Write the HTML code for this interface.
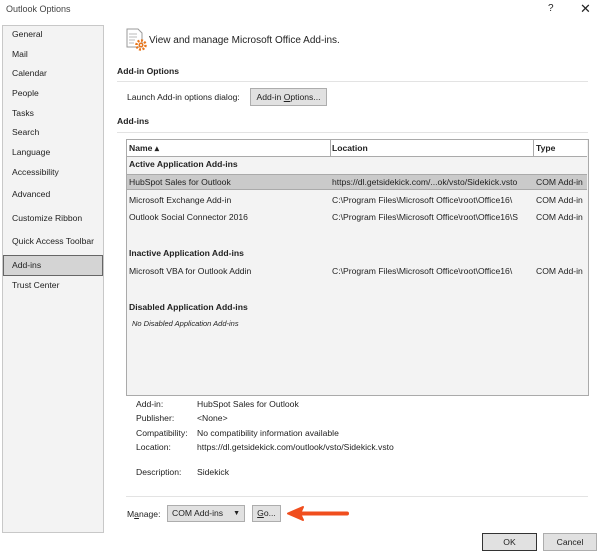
<!DOCTYPE html><html><head><style>
body{margin:0;width:600px;height:554px;background:#fff;font-family:"Liberation Sans",sans-serif;font-size:8.6px;color:#222;position:relative;overflow:hidden}
.a{position:absolute;white-space:nowrap}
.b{font-weight:bold}
.side{position:absolute;left:2px;top:25px;width:100px;height:506px;border:1px solid #c8c8c8;background:#f3f3f3}
.btn{position:absolute;background:#e1e1e1;border:1px solid #adadad;text-align:center;box-sizing:border-box}
.hr{position:absolute;height:1px;background:#e3e3e3}
</style></head><body>
<div class="a" style="left:6px;top:4px;font-size:9px;color:#444">Outlook Options</div>
<div class="a" style="left:548px;top:3px;font-size:10px">?</div>
<div class="a" style="left:580px;top:1px;font-size:13px">✕</div>
<div class="side"></div>
<div class="a" style="left:12px;top:29px">General</div>
<div class="a" style="left:12px;top:49px">Mail</div>
<div class="a" style="left:12px;top:68px">Calendar</div>
<div class="a" style="left:12px;top:88px">People</div>
<div class="a" style="left:12px;top:108px">Tasks</div>
<div class="a" style="left:12px;top:127px">Search</div>
<div class="a" style="left:12px;top:147px">Language</div>
<div class="a" style="left:12px;top:167px">Accessibility</div>
<div class="a" style="left:12px;top:189px">Advanced</div>
<div class="a" style="left:12px;top:213px">Customize Ribbon</div>
<div class="a" style="left:12px;top:236px">Quick Access Toolbar</div>
<div class="a" style="left:3px;top:255px;width:98px;height:19px;background:#d4d4d4;border:1px solid #666"></div>
<div class="a" style="left:12px;top:260px">Add-ins</div>
<div class="a" style="left:12px;top:280px">Trust Center</div>
<svg class="a" style="left:126px;top:28px" width="22" height="24"><path d="M1 1h11l4 4v14H1z" fill="#fff" stroke="#999"/><path d="M3 6h8M3 9h8M3 12h6M3 15h5" stroke="#bbb"/><circle cx="15" cy="17" r="4.5" fill="none" stroke="#e8761c" stroke-width="2.5" stroke-dasharray="2 1.5"/><circle cx="15" cy="17" r="2.5" fill="#e8761c"/><circle cx="15" cy="17" r="1" fill="#fff"/></svg>
<div class="a" style="left:149px;top:35px;font-size:10px">View and manage Microsoft Office Add-ins.</div>
<div class="a b" style="left:117px;top:66px">Add-in Options</div>
<div class="hr" style="left:117px;top:81px;width:471px"></div>
<div class="a" style="left:127px;top:92px">Launch Add-in options dialog:</div>
<div class="btn" style="left:250px;top:88px;width:77px;height:18px;line-height:16px">Add-in <u>O</u>ptions...</div>
<div class="a b" style="left:117px;top:116px">Add-ins</div>
<div class="hr" style="left:117px;top:132px;width:471px"></div>
<div class="a" style="left:126px;top:139px;width:461px;height:255px;border:1px solid #aaa;background:#f3f3f3"></div>
<div class="a" style="left:127px;top:140px;width:460px;height:16px;background:#fff;border-bottom:1px solid #aaa"></div>
<div class="a" style="left:330px;top:140px;width:1px;height:16px;background:#aaa"></div>
<div class="a" style="left:533px;top:140px;width:1px;height:16px;background:#aaa"></div>
<div class="a b" style="left:129px;top:143px">Name ▴</div>
<div class="a b" style="left:332px;top:143px">Location</div>
<div class="a b" style="left:536px;top:143px">Type</div>
<div class="a b" style="left:129px;top:159px">Active Application Add-ins</div>
<div class="a" style="left:127px;top:174px;width:460px;height:16px;background:#cacaca;border-top:1px solid #aaa;border-bottom:1px solid #aaa;box-sizing:border-box"></div>
<div class="a" style="left:129px;top:177px">HubSpot Sales for Outlook</div>
<div class="a" style="left:332px;top:177px">https://dl.getsidekick.com/...ok/vsto/Sidekick.vsto</div>
<div class="a" style="left:536px;top:177px">COM Add-in</div>
<div class="a" style="left:129px;top:195px">Microsoft Exchange Add-in</div>
<div class="a" style="left:332px;top:195px">C:\Program Files\Microsoft Office\root\Office16\</div>
<div class="a" style="left:536px;top:195px">COM Add-in</div>
<div class="a" style="left:129px;top:212px">Outlook Social Connector 2016</div>
<div class="a" style="left:332px;top:212px">C:\Program Files\Microsoft Office\root\Office16\S</div>
<div class="a" style="left:536px;top:212px">COM Add-in</div>
<div class="a b" style="left:129px;top:248px">Inactive Application Add-ins</div>
<div class="a" style="left:129px;top:266px">Microsoft VBA for Outlook Addin</div>
<div class="a" style="left:332px;top:266px">C:\Program Files\Microsoft Office\root\Office16\</div>
<div class="a" style="left:536px;top:266px">COM Add-in</div>
<div class="a b" style="left:129px;top:302px">Disabled Application Add-ins</div>
<div class="a" style="left:132px;top:319px;font-style:italic;font-size:7.5px">No Disabled Application Add-ins</div>
<div class="a" style="left:136px;top:399px">Add-in:</div><div class="a" style="left:197px;top:399px">HubSpot Sales for Outlook</div>
<div class="a" style="left:136px;top:413px">Publisher:</div><div class="a" style="left:197px;top:413px">&lt;None&gt;</div>
<div class="a" style="left:136px;top:428px">Compatibility:</div><div class="a" style="left:197px;top:428px">No compatibility information available</div>
<div class="a" style="left:136px;top:442px">Location:</div><div class="a" style="left:197px;top:442px">https://dl.getsidekick.com/outlook/vsto/Sidekick.vsto</div>
<div class="a" style="left:136px;top:467px">Description:</div><div class="a" style="left:197px;top:467px">Sidekick</div>
<div class="hr" style="left:126px;top:496px;width:462px"></div>
<div class="a" style="left:127px;top:509px">M<u>a</u>nage:</div>
<div class="btn" style="left:167px;top:505px;width:78px;height:17px;line-height:15px;text-align:left;padding-left:4px">COM Add-ins<span style="position:absolute;right:4px;font-size:7px">▼</span></div>
<div class="btn" style="left:252px;top:505px;width:29px;height:17px;line-height:15px"><u>G</u>o...</div>
<svg class="a" style="left:286px;top:504px" width="66" height="20"><path d="M14 9.5H61" stroke="#f04e1e" stroke-width="4" stroke-linecap="round"/><path d="M2 9.5L17 3L14 9.5L17 16Z" fill="#f04e1e" stroke="#f04e1e" stroke-width="2" stroke-linejoin="round"/></svg>
<div class="btn" style="left:482px;top:533px;width:55px;height:18px;line-height:16px;border:1px solid #333">OK</div>
<div class="btn" style="left:543px;top:533px;width:54px;height:18px;line-height:16px">Cancel</div>
</body></html>
